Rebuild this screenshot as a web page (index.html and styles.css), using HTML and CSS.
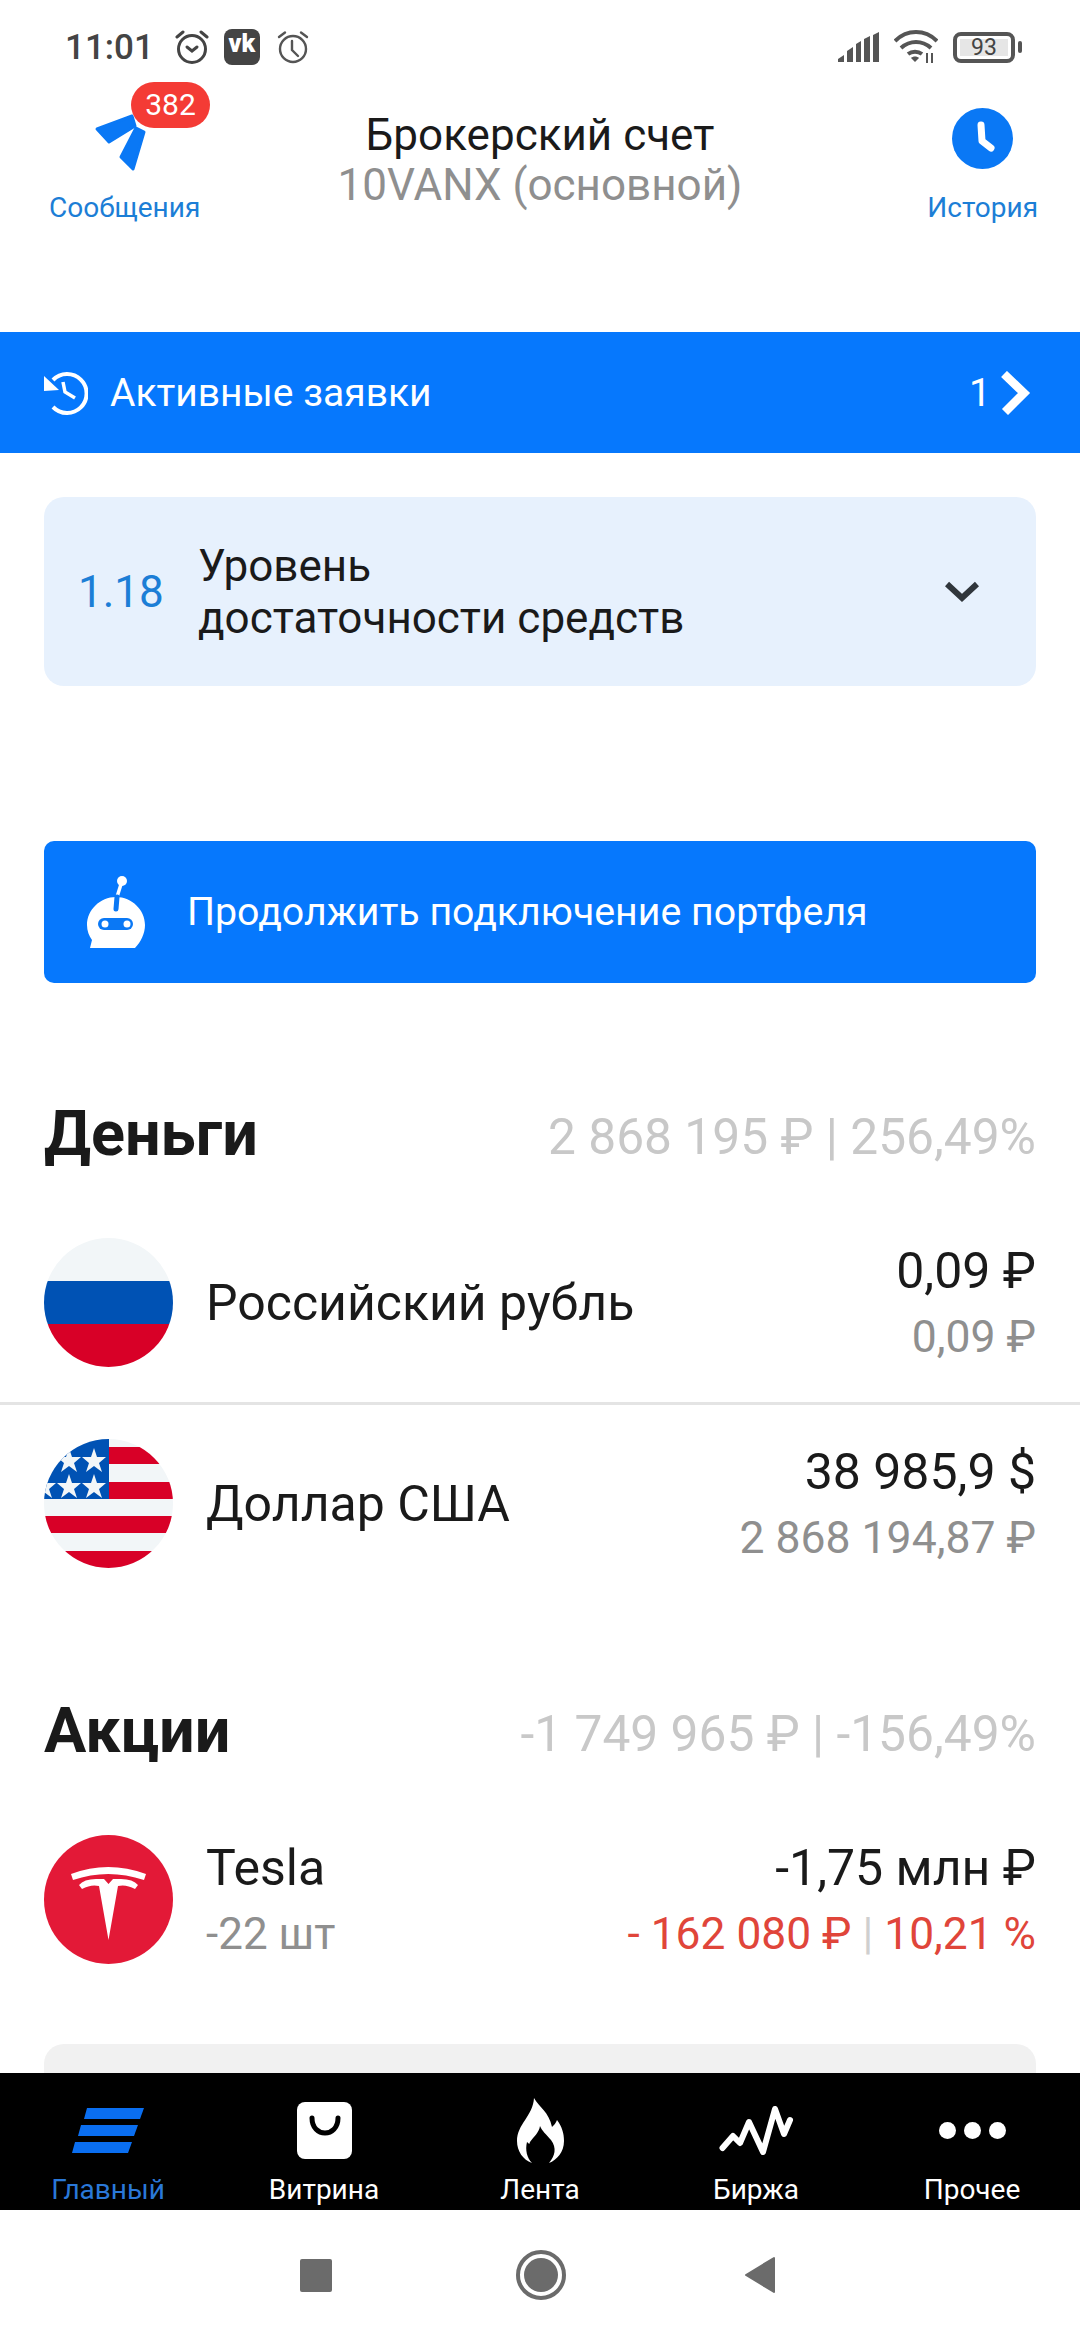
FILE: index.html
```html
<!DOCTYPE html>
<html lang="ru">
<head>
  <meta charset="UTF-8" />
  <title>Брокерский счет</title>
  <meta name="viewport" content="width=device-width, initial-scale=1.0">
  <link rel="stylesheet" href="styles.css">
</head>
<body>
  <div class="page">

    <div class="status">
      <span class="time">11:01</span>
      <svg class="st-icon" width="34" height="36" viewBox="0 0 34 36" fill="none" stroke="#444" stroke-width="3" stroke-linecap="round">
        <circle cx="17" cy="20" r="13.5"/>
        <path d="M2 8l6-5M32 8l-6-5"/>
        <path d="M12 18l5 4 5-4"/>
      </svg>
      <span class="vk">vk</span>
      <svg class="st-icon" width="34" height="34" viewBox="0 0 34 34" fill="none" stroke="#555" stroke-width="2.4" stroke-linecap="round">
        <circle cx="17" cy="19" r="13"/>
        <path d="M3 7l6-4.500M31 7l-6-4.500"/>
        <path d="M16 11v9l6 6"/>
      </svg>
      <div class="status-right">
        <svg width="41" height="30" viewBox="0 0 41 30" fill="#555">
          <path d="M0 30v-3l6-4v7zM9 30V19l6-4v15zM18 30V12l5-3v21zM26 30V7l6-3v26zM35 30V3l6-3v30z"/>
        </svg>
        <svg width="44" height="34" viewBox="0 0 44 34" fill="none" stroke="#555" stroke-width="4">
          <path d="M1 11c12-12 30-12 42 0"/>
          <path d="M7 18c9-8 21-8 30 0"/>
          <path d="M14 24c4-3 10-3 14 0"/>
          <path d="M21 32l-4-4c2-2 6-2 8 0z" fill="#555" stroke="none"/>
          <path d="M33 23v10M38 23v10" stroke-width="2"/>
        </svg>
        <div class="battery"><span class="battery-level">93</span></div>
        <span class="battery-nub"></span>
      </div>
    </div>

    <header class="header">
      <div class="head-btn head-left">
        <div class="msg-icon">
          <svg width="58" height="65" viewBox="0 0 58 65" fill="#0a78f5" stroke="#0a78f5" stroke-width="3" stroke-linejoin="round">
            <polygon points="6,19 41,6 44,16 18,32"/>
            <polygon points="53,22 42,59 30,47 45,18"/>
          </svg>
          <span class="badge">382</span>
        </div>
        <span class="head-label">Сообщения</span>
      </div>
      <div class="title">
        <div class="title-main">Брокерский счет</div>
        <div class="title-sub">10VANX (основной)</div>
      </div>
      <div class="head-btn head-right">
        <svg class="hist-icon" width="61" height="61" viewBox="0 0 61 61">
          <circle cx="30.500" cy="30.500" r="30.500" fill="#0a78f5"/>
          <path d="M29 17l1 16 9 7" fill="none" stroke="#fff" stroke-width="7" stroke-linecap="round" stroke-linejoin="round"/>
        </svg>
        <span class="head-label">История</span>
      </div>
    </header>

    <div class="orders">
      <svg width="44" height="44" viewBox="0 0 44 44" fill="none" stroke="#fff" stroke-width="4">
        <path d="M9 9A19.500 19.500 0 1 1 9 36"/>
        <path d="M0 5v15l15-1z" fill="#fff" stroke="none"/>
        <path d="M19 11l2 10 10 6" stroke-width="3.500"/>
      </svg>
      <span class="orders-text">Активные заявки</span>
      <span class="orders-count">1</span>
      <svg width="30" height="44" viewBox="0 0 30 44" fill="none" stroke="#fff" stroke-width="8.500">
        <path d="M3 3l20 19L4 41"/>
      </svg>
    </div>

    <main class="main">
      <div class="level">
        <span class="level-num">1.18</span>
        <span class="level-text">Уровень<br>достаточности средств</span>
        <svg width="34" height="22" viewBox="0 0 34 22" fill="none" stroke="#30363c" stroke-width="6">
          <path d="M2 3l15 14L32 3"/>
        </svg>
      </div>

      <div class="robot">
        <svg width="58" height="72" viewBox="0 0 58 72">
          <path d="M29 21C45 21 58 34 58 49C58 57 54 66 48 72L3 72L5 64C2 60 0 55 0 49C0 34 13 21 29 21Z" fill="#fff"/>
          <circle cx="35" cy="5" r="5" fill="#fff"/>
          <path d="M35 5L30 21" stroke="#fff" stroke-width="3.500"/>
          <path d="M30 21L29 33" stroke="#0a78f5" stroke-width="5" stroke-linecap="round"/>
          <rect x="11" y="42" width="35" height="12" rx="6" fill="#0a78f5"/>
          <circle cx="18" cy="48" r="3.500" fill="#fff"/>
          <circle cx="40" cy="48" r="3.500" fill="#fff"/>
        </svg>
        <span>Продолжить подключение портфеля</span>
      </div>

      <div class="sec-head sec-money">
        <h2>Деньги</h2>
        <span class="sec-sum">2 868 195 ₽ | 256,49%</span>
      </div>

      <div class="row row-line">
        <svg class="logo" viewBox="0 0 129 129">
          <clipPath id="clipRu"><circle cx="64.500" cy="64.500" r="64.500"/></clipPath>
          <g clip-path="url(#clipRu)">
            <rect width="129" height="43" fill="#f2f6f8"/>
            <rect y="43" width="129" height="43" fill="#0052b4"/>
            <rect y="86" width="129" height="43" fill="#d80027"/>
          </g>
        </svg>
        <span class="row-name">Российский рубль</span>
        <div class="row-vals">
          <div class="val-main">0,09 ₽</div>
          <div class="val-sub">0,09 ₽</div>
        </div>
      </div>

      <div class="row">
        <svg class="logo" viewBox="0 0 129 129">
          <clipPath id="clipUs"><circle cx="64.500" cy="64.500" r="64.500"/></clipPath>
          <g clip-path="url(#clipUs)">
            <rect width="129" height="129" fill="#f2f6f8"/>
            <rect x="64" y="8" width="65" height="17" fill="#d80027"/>
            <rect x="64" y="43" width="65" height="17" fill="#d80027"/>
            <rect y="77" width="129" height="17" fill="#d80027"/>
            <rect y="112" width="129" height="17" fill="#d80027"/>
            <rect width="65" height="60" fill="#0052b4"/>
            <g fill="#f2f6f8">
              <polygon points="50,9 53,18 62,18 55,24 58,33 50,27 42,33 45,24 38,18 47,18"/>
              <polygon points="25,9 28,18 37,18 30,24 33,33 25,27 17,33 20,24 13,18 22,18"/>
              <polygon points="50,35 53,44 62,44 55,50 58,59 50,53 42,59 45,50 38,44 47,44"/>
              <polygon points="25,35 28,44 37,44 30,50 33,59 25,53 17,59 20,50 13,44 22,44"/>
              <polygon points="0,35 3,44 12,44 5,50 8,59 0,53 -8,59 -5,50 -12,44 -3,44"/>
            </g>
          </g>
        </svg>
        <span class="row-name">Доллар США</span>
        <div class="row-vals">
          <div class="val-main">38 985,9 $</div>
          <div class="val-sub">2 868 194,87 ₽</div>
        </div>
      </div>

      <div class="sec-head sec-stocks">
        <h2>Акции</h2>
        <span class="sec-sum">-1 749 965 ₽ | -156,49%</span>
      </div>

      <div class="row">
        <svg class="logo" viewBox="0 0 129 129">
          <circle cx="64.500" cy="64.500" r="64.500" fill="#e31937"/>
          <path d="M27 39Q64 25 102 39L100 45Q64 33 29 45Z" fill="#fff"/>
          <path d="M35 50Q40 44 52 44L60 44L64.500 49L69 44L77 44Q89 44 94 50L91 54Q82 49 74 51L64.500 105L55 51Q47 49 38 54Z" fill="#fff"/>
        </svg>
        <div class="row-name-box">
          <div class="row-name">Tesla</div>
          <div class="row-note">-22 шт</div>
        </div>
        <div class="row-vals">
          <div class="val-main">-1,75 млн ₽</div>
          <div class="val-loss">- 162 080 ₽ <span class="val-sep">|</span> 10,21 %</div>
        </div>
      </div>

      <div class="gray-card"></div>
    </main>

    <nav class="tabs">
      <div class="tab tab-active">
        <div class="tab-icon">
          <svg width="72" height="45" viewBox="0 0 72 45" fill="#0a6ef0">
            <polygon points="15,0 72,0 68,11 12,11"/>
            <polygon points="9,17 66,17 62,28 6,28"/>
            <polygon points="3,34 60,34 56,45 0,45"/>
          </svg>
        </div>
        <span>Главный</span>
      </div>
      <div class="tab">
        <div class="tab-icon">
          <svg width="55" height="57" viewBox="0 0 55 57">
            <rect width="55" height="57" rx="8" fill="#fff"/>
            <path d="M15 16C15 36 41 36 41 16" fill="none" stroke="#000" stroke-width="5" stroke-linecap="round"/>
          </svg>
        </div>
        <span>Витрина</span>
      </div>
      <div class="tab">
        <div class="tab-icon">
          <svg width="47" height="65" viewBox="0 0 47 65" fill="#fff">
            <path d="M17 0C22 9 32 14 35 29C37 27 39 25 40 22C45 29 47 35 47 43C47 54 40 62 32 65C38 58 40 50 34 42C29 36 25 33 23 28C22 35 17 38 13 44C12 47 12.500 46 10 44C8 52 10 60 15 65C6 62 0 53 0 43C0 26 16 18 17 0Z"/>
          </svg>
        </div>
        <span>Лента</span>
      </div>
      <div class="tab">
        <div class="tab-icon">
          <svg width="76" height="52" viewBox="0 0 76 52" fill="none" stroke="#fff" stroke-width="6" stroke-linecap="round" stroke-linejoin="round">
            <polyline points="4.500,44 15,32 22,39 31,18 45,48 57,5 66,30 72,16"/>
          </svg>
        </div>
        <span>Биржа</span>
      </div>
      <div class="tab">
        <div class="tab-icon">
          <svg width="67" height="17" viewBox="0 0 67 17" fill="#fff">
            <circle cx="8.500" cy="8.500" r="8.500"/>
            <circle cx="33.500" cy="8.500" r="8.500"/>
            <circle cx="58.500" cy="8.500" r="8.500"/>
          </svg>
        </div>
        <span>Прочее</span>
      </div>
    </nav>

    <div class="sys-nav">
      <span class="sys-square"></span>
      <svg class="sys-home" width="50" height="50" viewBox="0 0 50 50">
        <circle cx="25" cy="25" r="23" fill="none" stroke="#6b6b6b" stroke-width="4"/>
        <circle cx="25" cy="25" r="17" fill="#6b6b6b"/>
      </svg>
      <svg width="32" height="38" viewBox="0 0 32 38">
        <path d="M2 19L30 2V36Z" fill="#6b6b6b" stroke="#6b6b6b" stroke-width="2" stroke-linejoin="round"/>
      </svg>
    </div>

  </div>
</body>
</html>
```

FILE: styles.css
```css
* {
  box-sizing: border-box;
}
body {
  margin: 0;
  background: #fff;
  font-family: Roboto, "Noto Sans", sans-serif;
  color: #1a1a1a;
}
.page {
  width: 1080px;
  height: 2340px;
  display: flex;
  flex-direction: column;
  overflow: hidden;
}

/* status bar */
.status {
  height: 82px;
  padding: 12px 62px 0 65px;
  display: flex;
  align-items: center;
}
.time {
  font-size: 35px;
  font-weight: 500;
  color: #444;
  margin-right: 21px;
}
.vk {
  width: 36px;
  height: 36px;
  margin: 0 16px 0 15px;
  border-radius: 8px;
  background: #444;
  color: #fff;
  font-size: 25px;
  line-height: 30px;
  font-weight: 900;
  text-align: center;
}
.status-right {
  margin-left: auto;
  display: flex;
  align-items: center;
  gap: 15px;
}
.battery {
  width: 62px;
  height: 31px;
  padding: 3px;
  margin-right: -12px;
  border: 4px solid #555;
  border-radius: 8px;
}
.battery-level {
  display: block;
  height: 17px;
  background: #e6e6e6;
  font-size: 23px;
  line-height: 17px;
  text-align: center;
  color: #444;
}
.battery-nub {
  width: 4px;
  height: 12px;
  margin-right: -4px;
  background: #555;
  border-radius: 2px;
}

/* header */
.header {
  height: 250px;
  display: grid;
  grid-template-columns: 1fr auto 1fr;
}
.head-btn {
  display: flex;
  flex-direction: column;
}
.head-left {
  justify-self: start;
  padding-left: 49px;
}
.head-right {
  justify-self: end;
  align-items: center;
  padding-right: 42px;
}
.msg-icon {
  position: relative;
  height: 93px;
  padding: 28px 0 0 42px;
  margin-bottom: 15px;
}
.badge {
  position: absolute;
  left: 82px;
  top: 0;
  width: 79px;
  height: 46px;
  border-radius: 23px;
  background: #f43b35;
  color: #fff;
  font-size: 30px;
  line-height: 46px;
  text-align: center;
}
.hist-icon {
  margin: 26px 0 21px;
}
.head-label {
  font-size: 28px;
  line-height: 36px;
  color: #1c7ed6;
}
.title {
  padding-top: 28px;
  text-align: center;
}
.title-main {
  font-size: 44px;
  line-height: 50px;
}
.title-sub {
  font-size: 44px;
  line-height: 50px;
  color: #8f8f8f;
}

/* active orders */
.orders {
  height: 121px;
  padding: 0 49px 0 44px;
  display: flex;
  align-items: center;
  background: #0678fd;
  color: #fff;
}
.orders-text {
  margin-left: 22px;
  font-size: 39px;
}
.orders-count {
  margin-left: auto;
  margin-right: 10px;
  font-size: 39px;
}

/* content */
.main {
  flex: 1;
  overflow: hidden;
}
.level {
  height: 189px;
  margin: 44px 44px 0;
  padding: 0 57px 0 34px;
  display: flex;
  align-items: center;
  background: #e7f1fd;
  border-radius: 20px;
}
.level-num {
  width: 86px;
  font-size: 44px;
  color: #1c7ed6;
}
.level-text {
  flex: 1;
  margin-left: 34px;
  font-size: 44px;
  line-height: 52px;
}
.robot {
  height: 142px;
  margin: 155px 44px 0;
  padding-left: 43px;
  display: flex;
  align-items: center;
  gap: 42px;
  background: #0678fd;
  border-radius: 10px;
  color: #fff;
  font-size: 39.300px;
}
.sec-head {
  height: 70px;
  margin: 0 44px;
  display: flex;
  align-items: center;
  justify-content: space-between;
}
.sec-money {
  margin-top: 115px;
}
.sec-stocks {
  margin-top: 92px;
}
.sec-head h2 {
  margin: 0;
  font-size: 63px;
  font-weight: 700;
}
.sec-sum {
  margin-top: 8px;
  font-size: 49.700px;
  color: #c8c8c8;
}
.row {
  margin-top: 35px;
  padding: 35px 44px;
  display: flex;
  align-items: center;
}
.row-line {
  border-bottom: 3px solid #e4e4e4;
}
.row-line + .row {
  margin-top: 0;
  padding-top: 34px;
}
.logo {
  width: 129px;
  height: 129px;
  flex-shrink: 0;
}
.row-name {
  font-size: 50px;
  line-height: 60px;
}
.logo + .row-name,
.row-name-box {
  margin-left: 33px;
}
.row-note {
  margin-top: 8px;
  font-size: 44px;
  line-height: 56px;
  color: #8f8f8f;
}
.row-vals {
  margin-left: auto;
  text-align: right;
}
.val-main {
  font-size: 50px;
  line-height: 60px;
}
.val-sub {
  margin-top: 8px;
  font-size: 44.500px;
  line-height: 56px;
  color: #8f8f8f;
}
.val-loss {
  margin-top: 8px;
  font-size: 44.300px;
  line-height: 56px;
  color: #e0453a;
}
.val-sep {
  color: #cfcfcf;
}
.gray-card {
  height: 100px;
  margin: 45px 44px 0;
  background: #f1f1f1;
  border-radius: 20px 20px 0 0;
}

/* bottom tabs */
.tabs {
  height: 137px;
  display: grid;
  grid-template-columns: repeat(5, 1fr);
  padding-top: 22px;
  background: #000;
  color: #fff;
  font-size: 28px;
}
.tab {
  display: flex;
  flex-direction: column;
  align-items: center;
}
.tab span {
  line-height: 36px;
}
.tab-active {
  color: #2a78d8;
}
.tab-icon {
  height: 70px;
  margin-bottom: 7px;
  display: flex;
  align-items: center;
  justify-content: center;
}

/* system nav */
.sys-nav {
  height: 130px;
  padding: 0 304px 0 300px;
  display: flex;
  align-items: center;
  justify-content: space-between;
}
.sys-home {
  margin-left: 6px;
}
.sys-square {
  width: 32px;
  height: 33px;
  border-radius: 2px;
  background: #6b6b6b;
}
```
